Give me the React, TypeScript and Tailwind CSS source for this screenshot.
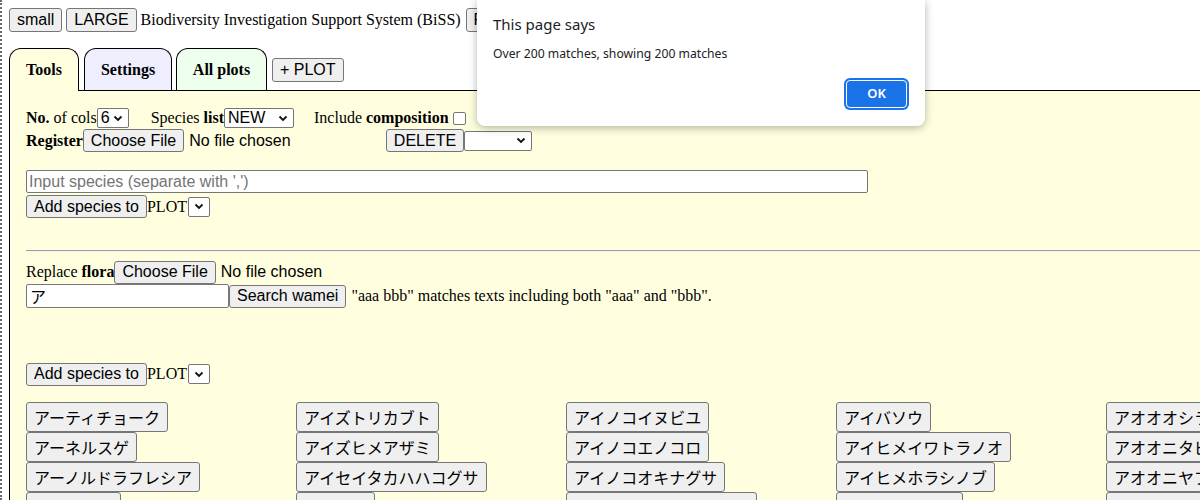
import type { ReactNode } from "react";

const serif = "font-['Liberation_Serif','Times_New_Roman',serif]";

function Btn({ children, className = "" }: { children: ReactNode; className?: string }) {
  return (
    <button
      className={`inline-flex h-[23px] shrink-0 items-center whitespace-nowrap rounded-[3px] border border-[#767676] bg-[#efefef] px-[7px] font-['Liberation_Sans',Arial,sans-serif] text-[16px] leading-none text-black ${className}`}
    >
      {children}
    </button>
  );
}

function Chevron() {
  return (
    <svg width="10" height="7" viewBox="0 0 10 7" className="shrink-0">
      <polyline points="1.5,1.5 5,5 8.5,1.5" fill="none" stroke="#111" strokeWidth="1.8" />
    </svg>
  );
}

function Select({ value, className = "" }: { value?: string; className?: string }) {
  return (
    <span
      className={`inline-flex h-[20px] shrink-0 items-center justify-between rounded-[2px] border border-[#767676] bg-white pl-[3px] pr-[5px] font-['Liberation_Sans',Arial,sans-serif] text-[16px] leading-none text-black ${className}`}
    >
      <span>{value}</span>
      <Chevron />
    </span>
  );
}

function FileInput({ className = "" }: { className?: string }) {
  return (
    <span className={`inline-flex shrink-0 items-center ${className}`}>
      <Btn>Choose File</Btn>
      <span className="ml-[5px] font-['Liberation_Sans',Arial,sans-serif] text-[16px] text-black">No file chosen</span>
    </span>
  );
}

const columns: string[][] = [
  ["アーティチョーク", "アーネルスゲ", "アーノルドラフレシア", "アイアスゲ", "アイアシ"],
  ["アイズトリカブト", "アイズヒメアザミ", "アイセイタカハハコグサ", "アイタデ", "アイダケ"],
  ["アイノコイヌビユ", "アイノコエノコロ", "アイノコオキナグサ", "アイノコヒロハタンポポ", "アイノコマツ"],
  ["アイバソウ", "アイヒメイワトラノオ", "アイヒメホラシノブ", "アイヒロハスゲ", "アイミズ"],
  ["アオオオシラビソ", "アオオニタビラコ", "アオオニヤブソテツ", "アオカズラ", "アオガシ"],
  ["アオキ", "アオギリ", "アオゲイトウ", "アオコウガイゼキショウ", "アオサギゴケ"],
];

export default function App() {
  return (
    <div className={`relative h-[500px] w-[1200px] overflow-hidden bg-white text-[16px] text-black ${serif}`}>
      <div className="flex h-full w-[1800px]">
        <div className="h-full w-0 border-l-2 border-dotted border-[#6b6b6b]" />
        <div className="flex-1 pl-[7px]">
          {/* header */}
          <div className="mt-[8px] flex h-[24px] items-center gap-[4px]">
            <Btn className="h-[24px]">small</Btn>
            <Btn className="h-[24px]">LARGE</Btn>
            <span className="whitespace-nowrap">Biodiversity Investigation Support System (BiSS)</span>
            <Btn className="ml-[1px] h-[24px]">Files</Btn>
          </div>

          {/* tabs */}
          <div className="mt-[16px] flex items-end">
            <div className="relative z-10 -mb-px flex h-[43px] w-[70px] items-center justify-center rounded-t-[12px] border border-b-0 border-black bg-[#ffffe0] pb-[1px] font-bold">
              Tools
            </div>
            <div className="ml-[5px] flex h-[42px] w-[88px] items-center justify-center rounded-t-[12px] border border-b-0 border-black bg-[#eeeeff] font-bold">
              Settings
            </div>
            <div className="ml-[4px] flex h-[42px] w-[91px] items-center justify-center rounded-t-[12px] border border-b-0 border-black bg-[#eeffee] font-bold">
              All plots
            </div>
            <Btn className="mb-[8px] ml-[5px] h-[24px]">+ PLOT</Btn>
          </div>

          {/* panel */}
          <div className="h-[500px] border-l border-t border-black bg-[#ffffe0] pl-[16px] pt-[16px]">
            <div className="flex h-[22px] items-center whitespace-nowrap">
              <span>
                <b>No.</b> of cols
              </span>
              <Select value="6" className="w-[32px]" />
              <span className="ml-[22px]">
                Species <b>list</b>
              </span>
              <Select value="NEW" className="w-[70px]" />
              <span className="ml-[20px]">
                Include <b>composition</b>
              </span>
              <span className="ml-[4px] h-[13px] w-[13px] rounded-[2px] border border-[#767676] bg-white" />
            </div>

            <div className="flex h-[23px] items-center whitespace-nowrap">
              <b>Register</b>
              <FileInput className="w-[299px]" />
              <Btn className="ml-[4px]">DELETE</Btn>
              <Select className="w-[68px]" />
            </div>

            <div className="mt-[18px] flex h-[23px] w-[842px] items-center rounded-[2px] border border-[#767676] bg-white pl-[2px] font-['Liberation_Sans',Arial,sans-serif] text-[16px] text-[#757575]">
              Input species (separate with &apos;,&apos;)
            </div>

            <div className="mt-[2px] flex h-[23px] items-center whitespace-nowrap">
              <Btn>Add species to</Btn>
              <span>PLOT</span>
              <Select className="ml-px w-[22px] justify-center !px-0" />
            </div>

            <div className="mt-[32px] border-b border-t border-b-[#f2f2f2] border-t-[#a0a0a0]" />

            <div className="mt-[8px] flex h-[24px] items-center whitespace-nowrap">
              <span>
                Replace <b>flora</b>
              </span>
              <FileInput />
            </div>

            <div className="flex h-[24px] items-center whitespace-nowrap">
              <span className="flex h-[24px] w-[203px] items-center rounded-[2px] border border-[#767676] bg-white pl-[3px] font-['Noto_Sans_CJK_JP',sans-serif] text-[16px]">
                ア
              </span>
              <Btn>Search wamei</Btn>
              <span className="ml-[5px]">&quot;aaa bbb&quot; matches texts including both &quot;aaa&quot; and &quot;bbb&quot;.</span>
            </div>

            <div className="mt-[54px] flex h-[24px] items-center whitespace-nowrap">
              <Btn>Add species to</Btn>
              <span>PLOT</span>
              <Select className="ml-px w-[22px] justify-center !px-0" />
            </div>

            <div className="mt-[16px] grid grid-cols-[repeat(6,270px)]">
              {columns.map((col, ci) => (
                <div key={ci} className="flex flex-col items-start">
                  {col.map((name) => (
                    <button
                      key={name}
                      className="flex h-[30px] items-center whitespace-nowrap rounded-[3px] border border-[#767676] bg-[#efefef] px-[7px] font-['Noto_Sans_CJK_JP',sans-serif] text-[16px] leading-none text-black"
                    >
                      {name}
                    </button>
                  ))}
                </div>
              ))}
            </div>
          </div>
        </div>
      </div>

      {/* alert dialog */}
      <div className="absolute left-[477px] top-0 h-[126px] w-[448px] rounded-b-[8px] bg-white font-['Noto_Sans','Open_Sans',sans-serif] shadow-[0_2px_8px_rgba(0,0,0,0.3)]">
        <div className="pl-[16px] pt-[13px] text-[15px] text-[#202124]">This page says</div>
        <div className="pl-[16px] pt-[9px] text-[12.2px] text-[#202124]">Over 200 matches, showing 200 matches</div>
        <div className="absolute left-[369px] top-[80px] flex h-[28px] w-[61px] items-center justify-center rounded-[4px] border border-white bg-[#1a73e8] text-[13px] font-semibold text-white ring-2 ring-[#1a73e8]">
          OK
        </div>
      </div>
    </div>
  );
}
